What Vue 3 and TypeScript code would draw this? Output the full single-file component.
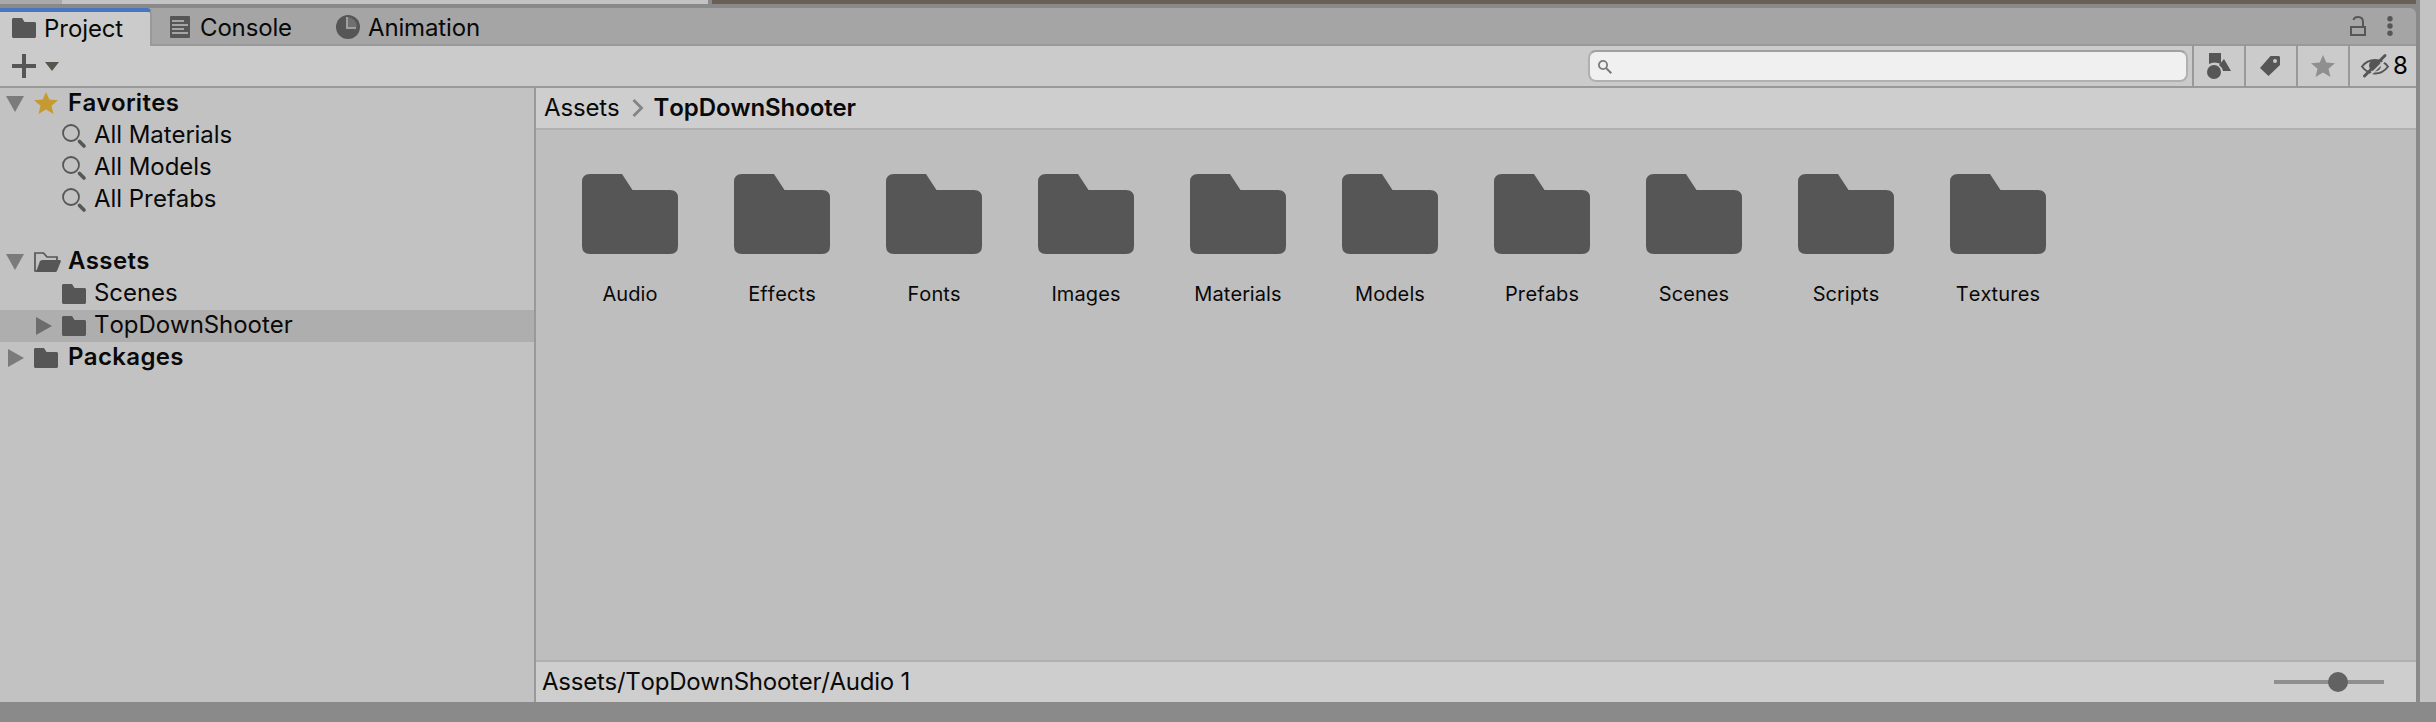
<script setup lang="ts">
interface Row { label: string; icon: string; depth: number; bold?: boolean; arrow?: 'down' | 'right'; selected?: boolean; gap?: boolean }
const rows: Row[] = [
  { label: 'Favorites', icon: 'star', depth: 0, bold: true, arrow: 'down' },
  { label: 'All Materials', icon: 'search', depth: 1 },
  { label: 'All Models', icon: 'search', depth: 1 },
  { label: 'All Prefabs', icon: 'search', depth: 1 },
  { label: 'Assets', icon: 'open', depth: 0, bold: true, arrow: 'down', gap: true },
  { label: 'Scenes', icon: 'folder', depth: 1 },
  { label: 'TopDownShooter', icon: 'folder', depth: 1, arrow: 'right', selected: true },
  { label: 'Packages', icon: 'folder', depth: 0, bold: true, arrow: 'right' },
]
const folders: string[] = ['Audio', 'Effects', 'Fonts', 'Images', 'Materials', 'Models', 'Prefabs', 'Scenes', 'Scripts', 'Textures']
</script>

<template>
  <div class="window">
    <div class="strip"><i class="s1"></i><i class="s2"></i><i class="s3"></i><i class="s4"></i></div>
    <div class="middle">
      <div class="panel">
        <div class="tabs">
          <div class="tab active">
            <svg width="24" height="20" viewBox="0 0 24 20"><path d="M1 0H10L12.500 4H23L24 5V19L23 20H1L0 19V1Z" fill="#565656" /></svg>
            <span>Project</span>
          </div>
          <div class="tab console">
            <svg width="20" height="22" viewBox="0 0 20 22"><rect width="20" height="22" rx="1" fill="#565656" /><path d="M2 5H14M2 9H18M2 13H14M2 17H18" stroke="#a5a5a5" stroke-width="2" /></svg>
            <span>Console</span>
          </div>
          <div class="tab animation">
            <svg width="24" height="24" viewBox="0 0 24 24"><circle cx="12" cy="12" r="12" fill="#565656" /><path d="M12 2A10 10 0 0 1 21 12H12Z" fill="#707070" /><path d="M11 2V13H20" fill="none" stroke="#a0a0a0" stroke-width="2" /></svg>
            <span>Animation</span>
          </div>
          <div class="tab-tools">
            <svg width="16" height="20" viewBox="0 0 16 20"><path d="M1 11H15V19H1Z M3.5 4Q4 1 8 1Q13 1 13 6V11" fill="none" stroke="#565656" stroke-width="2" /></svg>
            <svg width="6" height="20" viewBox="0 0 6 20"><g fill="#565656"><circle cx="3" cy="2.7" r="2.7" /><circle cx="3" cy="10" r="2.7" /><circle cx="3" cy="17.3" r="2.7" /></g></svg>
          </div>
        </div>
        <div class="toolbar">
          <svg class="plus" width="24" height="24" viewBox="0 0 24 24"><path d="M12 0V24M0 12H24" stroke="#565656" stroke-width="4" /></svg>
          <svg class="drop" width="14" height="9" viewBox="0 0 14 9"><path d="M0 0H14L7 9Z" fill="#56564e" /></svg>
          <div class="search">
            <svg width="14" height="14" viewBox="0 0 14 14"><circle cx="5" cy="5" r="4.1" fill="none" stroke="#7a7a7a" stroke-width="1.8" /><path d="M8 8L13.3 13.3" stroke="#7a7a7a" stroke-width="2" /></svg>
          </div>
          <div class="tool shapes">
            <svg width="24" height="26" viewBox="0 0 24 26"><g fill="#565656"><path d="M2 0H14V11Q7 8 2 11Z" /><circle cx="7" cy="19" r="7" /><path d="M17 6L24 18H16Q15 14 12 12Z" /></g></svg>
          </div>
          <div class="tool tag">
            <svg width="20" height="20" viewBox="0 0 20 20"><path fill-rule="evenodd" d="M10.500 0H19L20 1V9L8.500 20L0 12ZM15 3A2 2 0 1 0 15 7A2 2 0 1 0 15 3Z" fill="#565656" /></svg>
          </div>
          <div class="tool fav">
            <svg width="24" height="22" viewBox="0 0 24 22"><path d="M12 0L15.300 7.500L24 8.200L17.500 13.700L19.500 22L12 17.600L4.500 22L6.500 13.700L0 8.200L8.700 7.500Z" fill="#8f8f8f" /></svg>
          </div>
          <div class="tool hidden">
            <svg width="28" height="24" viewBox="0 0 28 24"><path d="M1 12.500Q6 6 14 6Q22 6 27 12.500Q22 19.500 14 19.500Q6 19.500 1 12.500Z" fill="none" stroke="#565656" stroke-width="2" /><circle cx="14" cy="11.500" r="6" fill="#565656" /><path d="M5.500 24.500L27 3.500" stroke="#cbcbcb" stroke-width="2" /><path d="M3.500 22L24 1.500" stroke="#565656" stroke-width="3" stroke-linecap="round" /></svg>
            <span>8</span>
          </div>
        </div>
        <div class="body">
          <div class="tree">
            <div v-for="r in rows" :key="r.label" class="row" :class="{ child: r.depth, bold: r.bold, selected: r.selected, gap: r.gap }">
              <span class="arrow" :class="r.arrow">
                <svg v-if="r.arrow === 'down'" width="18" height="16" viewBox="0 0 18 16"><path d="M0 0H18L9 16Z" fill="#7b7b7b" /></svg>
                <svg v-else-if="r.arrow" width="16" height="18" viewBox="0 0 16 18"><path d="M0 0V18L16 9Z" :fill="r.selected ? '#6d6d6d' : '#7b7b7b'" /></svg>
              </span>
              <span class="icon">
                <svg v-if="r.icon === 'star'" class="star" width="24" height="22" viewBox="0 0 24 22"><path d="M12 0L15.300 7.500L24 8.200L17.500 13.700L19.500 22L12 17.600L4.500 22L6.500 13.700L0 8.200L8.700 7.500Z" fill="#c59b31" /></svg>
                <svg v-else-if="r.icon === 'search'" width="24" height="24" viewBox="0 0 24 24"><circle cx="9" cy="9" r="8" fill="none" stroke="#565656" stroke-width="1.800" /><path d="M17.500 17.500L22 22" stroke="#565656" stroke-width="3.600" stroke-linecap="round" /></svg>
                <svg v-else-if="r.icon === 'open'" width="27" height="20" viewBox="0 0 27 20"><path d="M6 19H1V1H9.500L13 5H23V8" fill="none" stroke="#565656" stroke-width="1.700" /><path d="M8 8H26L27 9L23 19L22 20H2L6 9Z" fill="#565656" /></svg>
                <svg v-else width="24" height="20" viewBox="0 0 24 20"><path d="M1 0H10L12.500 4H23L24 5V19L23 20H1L0 19V1Z" fill="#565656" /></svg>
              </span>
              <span class="label">{{ r.label }}</span>
            </div>
          </div>
          <div class="content">
            <div class="crumbs">
              <span>Assets</span>
              <svg width="12" height="18" viewBox="0 0 12 18"><path d="M1.500 1L9.500 9L1.500 17" fill="none" stroke="#848484" stroke-width="2.800" /></svg>
              <b>TopDownShooter</b>
            </div>
            <div class="grid">
              <div v-for="f in folders" :key="f" class="item">
                <svg width="96" height="80" viewBox="0 0 96 80"><path d="M8 0H40L50.500 16H88Q96 16 96 24V72Q96 80 88 80H8Q0 80 0 72V8Q0 0 8 0Z" fill="#565656" /></svg>
                <span>{{ f }}</span>
              </div>
            </div>
            <div class="footer">
              <span>Assets/TopDownShooter/Audio 1</span>
              <div class="slider"><div class="thumb"></div></div>
            </div>
          </div>
        </div>
      </div>
      <div class="edge"></div>
    </div>
    <div class="bottom"></div>
  </div>
</template>

<style>
body { background: #8a8a8a; overflow: hidden; }
</style>
<style scoped>
* { box-sizing: border-box; }
svg { display: block; flex: none; overflow: visible; }
.window { position: relative; width: 2436px; height: 722px; background: #8a8a8a; font: 24px/32px Inter, "Liberation Sans", sans-serif; font-kerning: none; letter-spacing: -0.15px; color: #090909; display: flex; flex-direction: column; white-space: nowrap; }
.strip { height: 4px; display: flex; flex: none; }
.s1 { width: 62px; background: #a9a9a9; }
.s2 { width: 646px; background: #c3c3c3; }
.s3 { width: 4px; }
.s4 { width: 1704px; background: #685f57; }
.middle { height: 698px; display: flex; }
.panel { width: 2416px; padding-top: 4px; display: flex; flex-direction: column; }
.edge { width: 16px; margin: -4px 0 0 4px; background: #c3c3c3; }
.tabs { height: 38px; display: flex; background: #a5a5a5; border-bottom: 2px solid #999; border-top-right-radius: 6px; flex: none; }
.tab { display: flex; align-items: center; height: 36px; }
.active { width: 152px; height: 38px; background: #cbcbcb; border-top: 4px solid #4678bf; border-right: 2px solid #999; border-top-right-radius: 5px; padding: 0 0 2px 12px; gap: 8px; }
.tab span { position: relative; top: 1px; }
.console { padding: 2px 0 0 18px; gap: 10px; width: 184px; }
.animation { padding-top: 2px; gap: 8px; }
.tab-tools { margin-left: auto; display: flex; align-items: center; gap: 21px; padding-right: 23px; }
.toolbar { height: 42px; background: #cbcbcb; border-bottom: 2px solid #999; display: flex; align-items: center; flex: none; }
.plus { margin-left: 12px; }
.drop { margin-left: 9px; }
.search { margin-left: auto; width: 600px; height: 32px; border: 2px solid #b0b0b0; border-top-color: #a0a0a0; border-radius: 8px; background: #f0f0f0; margin-right: 4px; padding: 8px 0 0 8px; }
.tool { width: 52px; height: 40px; border-left: 2px solid #999; display: flex; align-items: center; justify-content: center; }
.tag { padding-right: 3px; }
.hidden { width: 68px; justify-content: flex-start; padding-left: 11px; gap: 4px; color: #000; }
.body { height: 614px; display: flex; }
.tree { width: 536px; background: #c2c2c2; border-right: 2px solid #999; letter-spacing: -0.05px; }
.row { height: 32px; display: flex; align-items: center; padding-left: 6px; }
.child { padding-left: 34px; }
.gap { margin-top: 30px; }
.selected { background: #aeaeae; }
.label { position: relative; top: -1px; }
.arrow { width: 28px; display: flex; justify-content: flex-start; }
.arrow.right { padding-left: 2px; }
.icon { width: 34px; }
.child .icon { width: 32px; }
.star { position: relative; top: -1px; }
.bold, b { font-weight: 600; }
.bold { letter-spacing: 0.35px; }
.content { width: 1880px; background: #bebebe; display: flex; flex-direction: column; }
.crumbs { height: 42px; background: #cecece; border-bottom: 2px solid #b0b0b0; display: flex; align-items: center; padding-left: 8px; }
.crumbs svg { margin: 0 10px 0 12px; }
.crumbs b { letter-spacing: -0.1px; }
.grid { flex: 1; display: flex; padding: 44px 0 0 18px; }
.item { width: 152px; display: flex; flex-direction: column; align-items: center; font-size: 20px; }
.item span { margin-top: 24px; letter-spacing: 0.1px; }
.footer { height: 42px; background: #cecece; border-top: 2px solid #b0b0b0; display: flex; align-items: center; justify-content: space-between; padding: 0 32px 0 6px; letter-spacing: -0.25px; }
.slider { width: 110px; height: 4px; background: #8f8f8f; display: flex; align-items: center; padding-left: 54px; }
.thumb { width: 20px; height: 20px; flex: none; border-radius: 50%; background: #626262; }
</style>
